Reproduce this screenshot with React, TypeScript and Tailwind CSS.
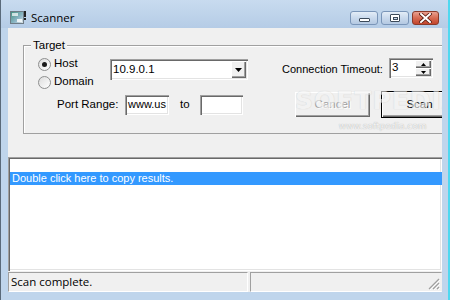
import React from "react";

const sunken =
  "shadow-[inset_1px_1px_0_#a0a0a0,inset_2px_2px_0_#696969,inset_-1px_-1px_0_#ffffff,inset_-2px_-2px_0_#e3e3e3]";
const raised =
  "shadow-[inset_1px_1px_0_#ffffff,inset_-1px_-1px_0_#696969,inset_-2px_-2px_0_#a0a0a0]";
const ui = "font-['Liberation_Sans',Arial,sans-serif] text-[11px] text-black";

function AppIcon() {
  return (
    <svg width="16" height="15" viewBox="0 0 16 15">
      <defs>
        <linearGradient id="ig" x1="0" y1="0" x2="1" y2="1">
          <stop offset="0" stopColor="#3f8f7f" />
          <stop offset="0.6" stopColor="#8fb7c7" />
          <stop offset="1" stopColor="#e4e8ec" />
        </linearGradient>
      </defs>
      <rect x="0.5" y="1.5" width="13" height="12" fill="url(#ig)" stroke="#6f7c86" />
      <rect x="2" y="3" width="6" height="3" fill="#ffffff" opacity="0.7" />
      <rect x="7" y="9" width="5" height="3" fill="#ffffff" opacity="0.8" />
      <rect x="14" y="1" width="2" height="6" fill="#222" />
      <rect x="14" y="8" width="2" height="2" fill="#222" />
    </svg>
  );
}

function CapButton({ kind }: { kind: "min" | "max" | "close" }) {
  const isClose = kind === "close";
  return (
    <div
      className={`flex h-[14px] items-center justify-center rounded-[3px] border ${
        isClose
          ? "w-[27px] border-[#8a3a2a] bg-linear-to-b from-[#e8a090] via-[#d66a52] to-[#c2452c]"
          : "w-[28px] border-[#7a95b8] bg-linear-to-b from-[#e4edf7] via-[#c9d9ec] to-[#b4c9e2]"
      }`}
    >
      {kind === "min" && (
        <div className="mt-[3px] h-[4px] w-[11px] rounded-[1px] border border-[#3c4a5a] bg-white" />
      )}
      {kind === "max" && (
        <div className="flex h-[8px] w-[10px] items-center justify-center rounded-[1px] border border-[#3c4a5a] bg-white">
          <div className="h-[3px] w-[5px] border border-[#3c4a5a] bg-[#c9d9ec]" />
        </div>
      )}
      {kind === "close" && (
        <svg width="13" height="10" viewBox="0 0 13 10">
          <path d="M2 1 L11 9 M11 1 L2 9" stroke="#5a1a10" strokeWidth="3.6" strokeLinecap="square" />
          <path d="M2 1 L11 9 M11 1 L2 9" stroke="#ffffff" strokeWidth="2" strokeLinecap="square" />
        </svg>
      )}
    </div>
  );
}

function Radio({ checked, label }: { checked?: boolean; label: string }) {
  return (
    <div className="flex h-[18px] items-center">
      <div className="flex h-[13px] w-[13px] items-center justify-center rounded-full border border-[#8e8f8f] bg-linear-to-br from-[#dcdcdc] to-white">
        {checked && <div className="h-[5px] w-[5px] rounded-full bg-[#1a1a1a]" />}
      </div>
      <span className="ml-[3px] text-[11.5px]">{label}</span>
    </div>
  );
}

function Btn({ label, disabled, def }: { label: string; disabled?: boolean; def?: boolean }) {
  return (
    <div
      className={`flex h-[25px] w-[75px] shrink-0 items-center justify-center bg-[#f0f0f0] ${raised} ${
        def ? "outline outline-1 outline-black" : ""
      }`}
    >
      <span
        className={`text-[11.5px] ${
          disabled ? "text-[#a0a0a0] [text-shadow:1px_1px_0_#ffffff]" : "text-black"
        }`}
      >
        {label}
      </span>
    </div>
  );
}

export default function App() {
  return (
    <div className="relative flex h-[300px] w-[450px] flex-col overflow-hidden border-l border-l-[#5a6a7a] border-r-2 border-r-[#4fd8f0] bg-[#bfd5ec]">
      {/* title bar */}
      <div className="flex h-[28px] shrink-0 items-start bg-linear-to-b from-[#c8dbef] to-[#b5cce6] pl-[9px] pr-[9px] pt-[10px]">
        <AppIcon />
        <span className="ml-[5px] font-['Open_Sans',sans-serif] text-[11.5px] leading-[15px] text-black">
          Scanner
        </span>
        <div className="ml-auto flex gap-[3px] pt-[1px]">
          <CapButton kind="min" />
          <CapButton kind="max" />
          <CapButton kind="close" />
        </div>
      </div>

      {/* client area */}
      <div className={`relative ml-[7px] flex h-[264px] w-[434px] flex-col overflow-hidden bg-[#f0f0f0] ${ui}`}>
        {/* top section */}
        <div className="h-[129px] shrink-0 pl-[15px] pt-[17px]">
          <div className="relative h-[89px] w-[440px] border border-[#a0a0a0] shadow-[inset_1px_1px_0_#ffffff]">
            <span className="absolute left-[7px] top-[-8px] bg-[#f0f0f0] px-[2px] text-[11.5px] leading-[14px]">
              Target
            </span>
            {/* row A */}
            <div className="flex h-[46px] items-start pl-[14px] pt-[9px]">
              <div className="flex w-[72px] shrink-0 flex-col">
                <Radio checked label="Host" />
                <Radio label="Domain" />
              </div>
              <div className={`mt-[4px] flex h-[21px] w-[138px] shrink-0 items-center bg-white pl-[3px] pr-[2px] ${sunken}`}>
                <span className="text-[11.5px]">10.9.0.1</span>
                <div className={`ml-auto flex h-[17px] w-[15px] items-center justify-center bg-[#f0f0f0] ${raised}`}>
                  <svg width="7" height="4" viewBox="0 0 7 4">
                    <path d="M0 0 H7 L3.5 4 Z" fill="#000" />
                  </svg>
                </div>
              </div>
              <span className="ml-[34px] mt-[7px] w-[107px] shrink-0 whitespace-nowrap text-[11px] leading-[14px]">
                Connection Timeout:
              </span>
              <div className={`mt-[3px] flex h-[20px] w-[44px] shrink-0 items-center bg-white pl-[3px] pr-[2px] ${sunken}`}>
                <span className="text-[11.5px]">3</span>
                <div className="ml-auto flex flex-col">
                  <div className={`flex h-[8px] w-[16px] items-center justify-center bg-[#f0f0f0] ${raised}`}>
                    <svg width="5" height="3" viewBox="0 0 5 3">
                      <path d="M0 3 H5 L2.5 0 Z" fill="#000" />
                    </svg>
                  </div>
                  <div className={`flex h-[8px] w-[16px] items-center justify-center bg-[#f0f0f0] ${raised}`}>
                    <svg width="5" height="3" viewBox="0 0 5 3">
                      <path d="M0 0 H5 L2.5 3 Z" fill="#000" />
                    </svg>
                  </div>
                </div>
              </div>
            </div>
            {/* row B */}
            <div className="flex h-[25px] items-center pl-[33px]">
              <span className="w-[68px] shrink-0 whitespace-nowrap text-[11.5px]">Port Range:</span>
              <div className={`flex h-[20px] w-[44px] shrink-0 items-center overflow-hidden bg-white pl-[3px] ${sunken}`}>
                <span className="text-[11px]">www.us</span>
              </div>
              <span className="ml-[11px] w-[20px] shrink-0 text-[11.5px]">to</span>
              <div className={`h-[20px] w-[43px] shrink-0 bg-white ${sunken}`} />
              <div className="ml-[52px] flex gap-[12px]">
                <Btn label="Cancel" disabled />
                <Btn label="Scan" def />
              </div>
            </div>
          </div>
        </div>

        {/* results list */}
        <div className={`flex h-[114px] shrink-0 flex-col bg-white pl-[2px] pt-[2px] ${sunken}`}>
          <div className="h-[13px]" />
          <div className="flex h-[13px] items-center bg-[#3399ff] pl-[2px] text-[11px] leading-[13px] text-white">
            Double click here to copy results.
          </div>
        </div>

        {/* status bar */}
        <div className="flex h-[21px] shrink-0 gap-[2px] pt-[1px] font-['Open_Sans',sans-serif]">
          <div className="flex h-[20px] w-[240px] items-center border border-b-white border-l-[#a0a0a0] border-r-white border-t-[#a0a0a0] pl-[2px]">
            <span className="text-[11.5px] leading-[14px]">Scan complete.</span>
          </div>
          <div className="relative h-[20px] flex-1 border border-b-white border-l-[#a0a0a0] border-r-transparent border-t-[#a0a0a0]">
            <svg className="absolute bottom-[1px] right-[1px]" width="12" height="12" viewBox="0 0 12 12">
              <path d="M11 1 L1 11 M11 5 L5 11 M11 9 L9 11" stroke="#a0a0a0" strokeWidth="1.2" />
              <path d="M12 2 L2 12 M12 6 L6 12 M12 10 L10 12" stroke="#ffffff" strokeWidth="1" />
            </svg>
          </div>
        </div>

        {/* watermark */}
        <div className="pointer-events-none absolute left-[287px] top-[59px] flex flex-col items-center">
          <span className="font-['DejaVu_Sans',sans-serif] text-[25px] font-bold leading-[28px] tracking-[1px] text-[#f4f4f4] opacity-60 [text-shadow:0_0_1px_#b4b4b4]">
            SOFTPEDIA<sup className="text-[7px] font-normal">™</sup>
          </span>
          <span className="mt-[6px] font-['DejaVu_Sans',sans-serif] text-[9px] leading-[10px] text-[#f4f4f4] [text-shadow:0_0_1px_#a0a0a0]">
            www.softpedia.com
          </span>
        </div>
      </div>
    </div>
  );
}
